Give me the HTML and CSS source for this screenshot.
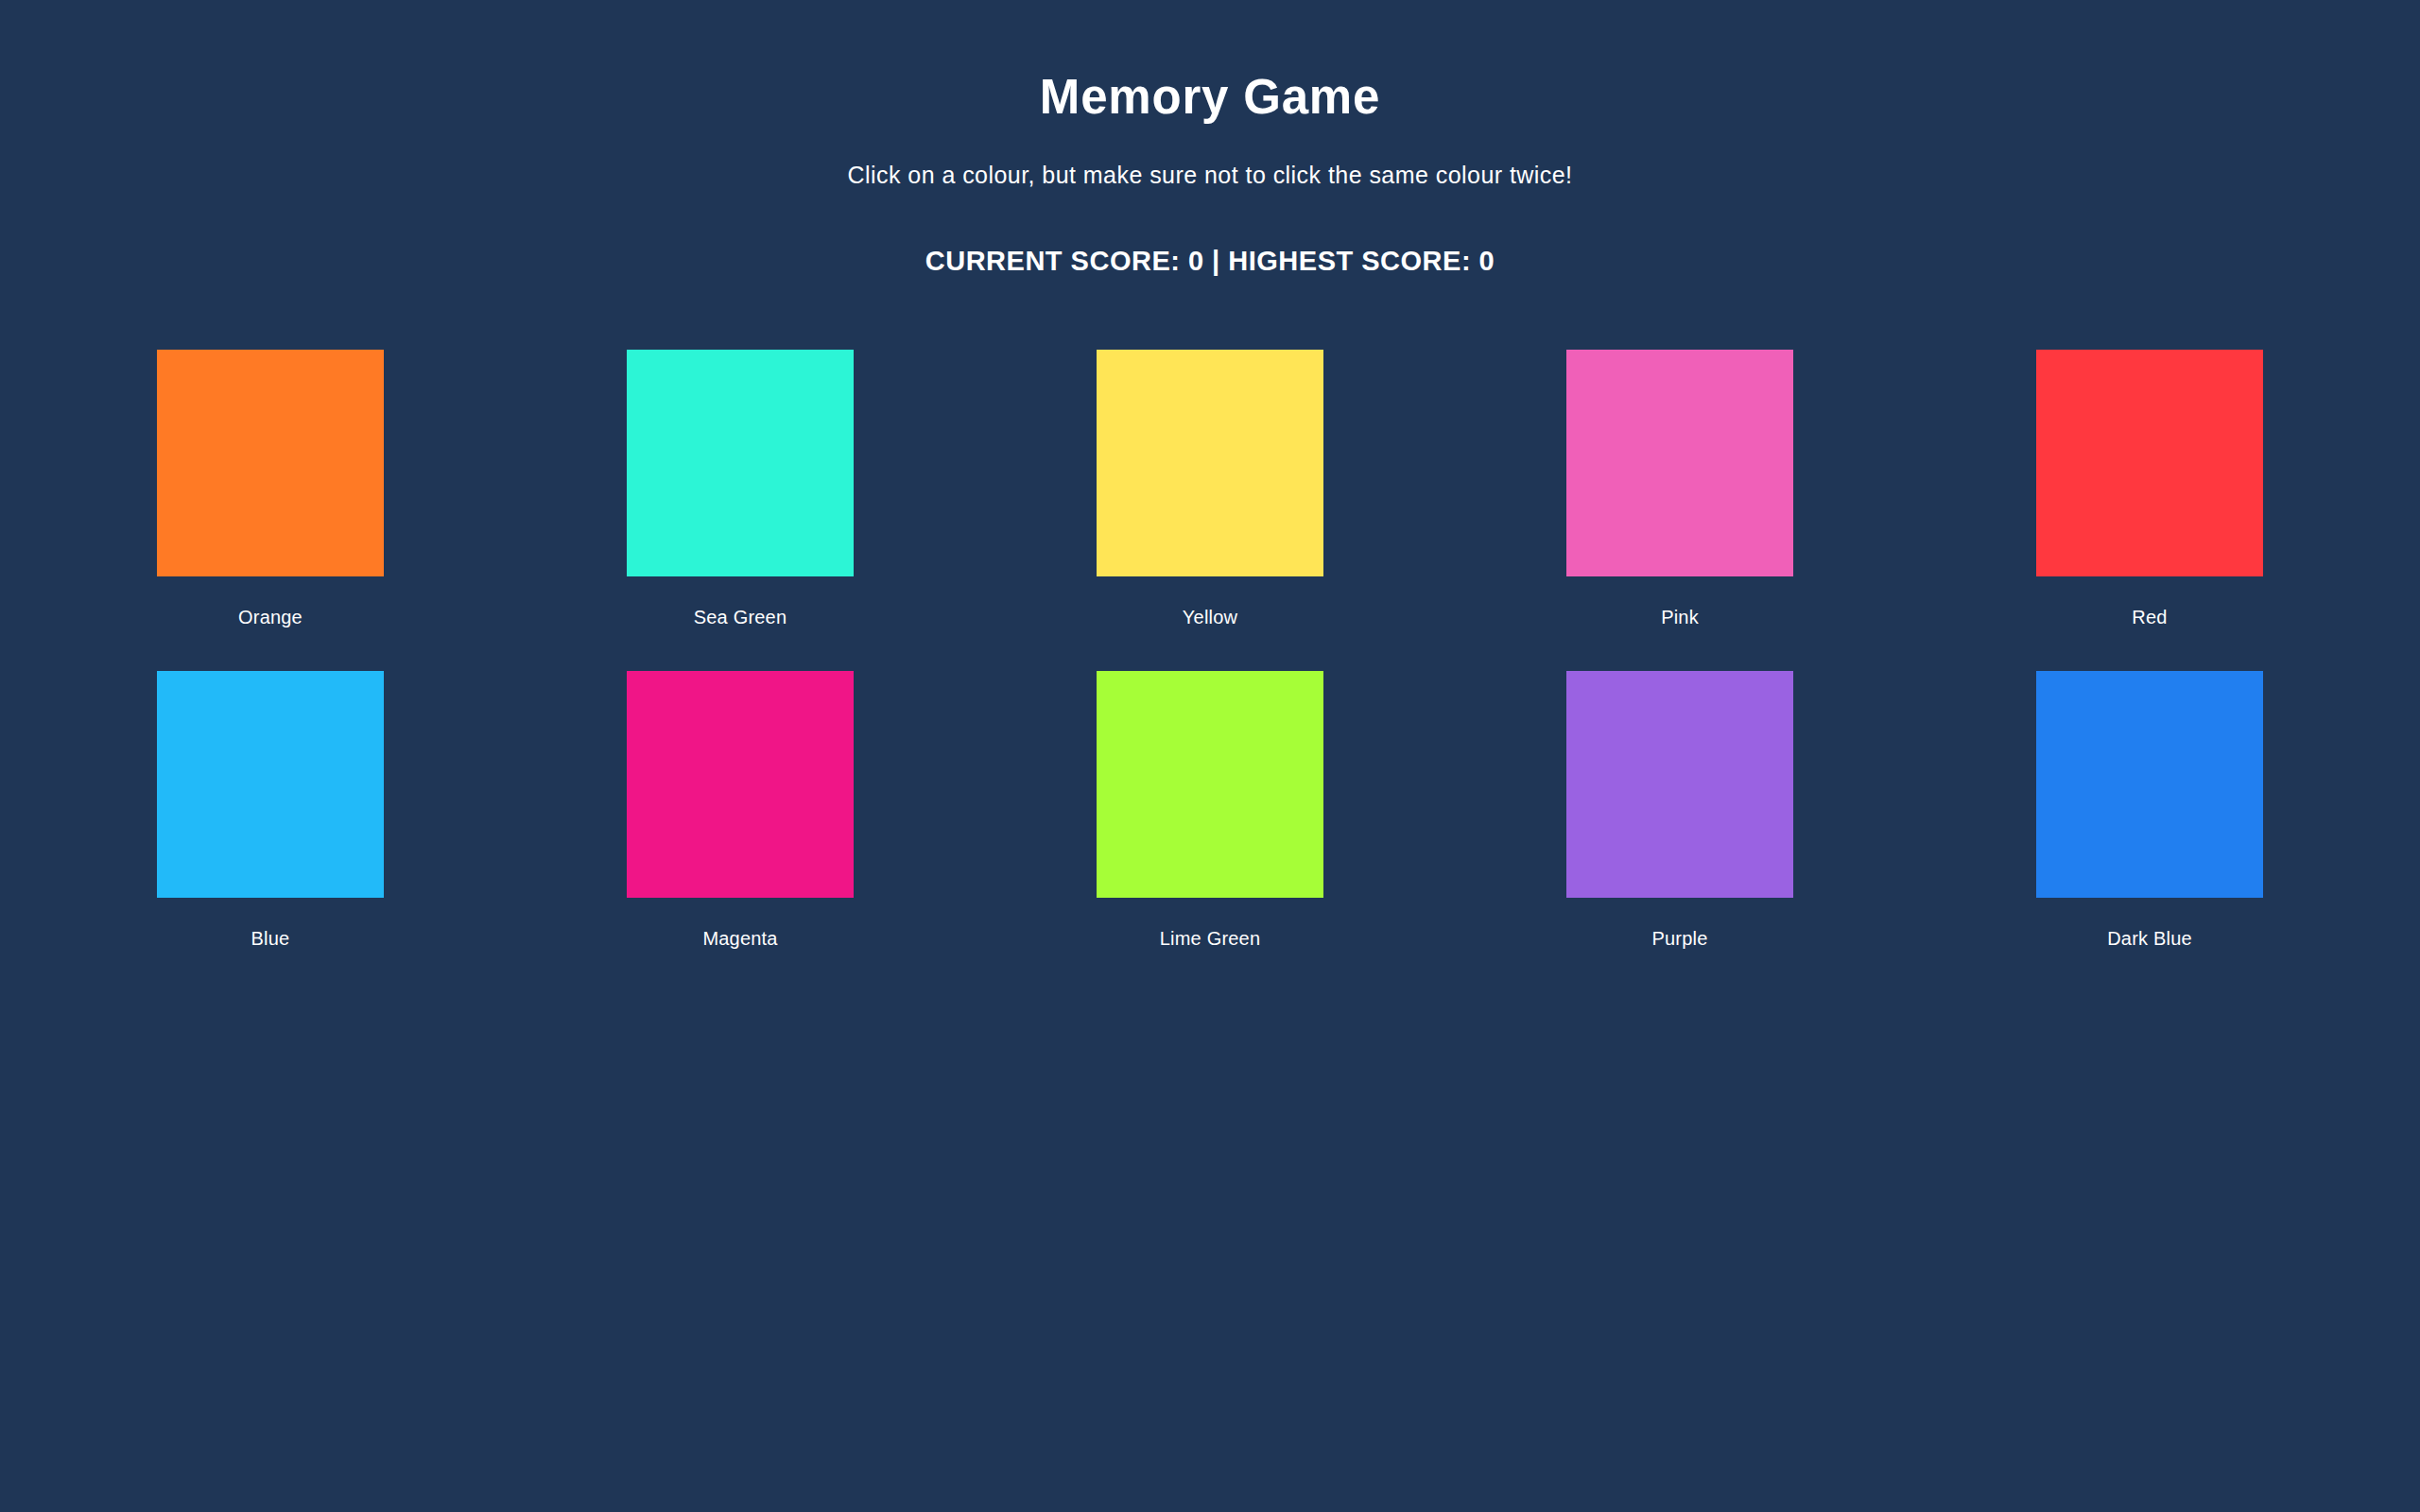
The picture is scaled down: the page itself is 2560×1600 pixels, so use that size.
FILE: index.html
```html
<!DOCTYPE html>
<html lang="en">
<head>
<meta charset="utf-8">
<title>Memory Game</title>
<link rel="stylesheet" href="styles.css">
</head>
<body>
<header class="header">
  <h1 class="title">Memory Game</h1>
  <p class="subtitle">Click on a colour, but make sure not to click the same colour twice!</p>
  <h2 class="score">CURRENT SCORE: 0 | HIGHEST SCORE: 0</h2>
</header>
<main class="grid">
  <div class="card"><div class="swatch orange"></div><div class="label">Orange</div></div>
  <div class="card"><div class="swatch seagreen"></div><div class="label">Sea Green</div></div>
  <div class="card"><div class="swatch yellow"></div><div class="label">Yellow</div></div>
  <div class="card"><div class="swatch pink"></div><div class="label">Pink</div></div>
  <div class="card"><div class="swatch red"></div><div class="label">Red</div></div>
  <div class="card"><div class="swatch blue"></div><div class="label">Blue</div></div>
  <div class="card"><div class="swatch magenta"></div><div class="label">Magenta</div></div>
  <div class="card"><div class="swatch lime"></div><div class="label">Lime Green</div></div>
  <div class="card"><div class="swatch purple"></div><div class="label">Purple</div></div>
  <div class="card"><div class="swatch darkblue"></div><div class="label">Dark Blue</div></div>
</main>
</body>
</html>
```
FILE: styles.css
```css
html, body {
  margin: 0;
  padding: 0;
  background: #1f3656;
  min-height: 100%;
}
body {
  font-family: "Liberation Sans", Arial, Helvetica, sans-serif;
  color: #ffffff;
  min-height: 1600px;
}
.header {
  text-align: center;
  padding-top: 73px;
}
.title {
  margin: 0;
  font-size: 51px;
  line-height: 60px;
  font-weight: bold;
  letter-spacing: 0.8px;
}
.subtitle {
  margin: 37px 0 0;
  font-size: 25px;
  line-height: 30px;
  letter-spacing: 0.45px;
}
.score {
  margin: 59px 0 0;
  font-size: 29px;
  line-height: 34px;
  font-weight: bold;
  letter-spacing: 0.5px;
}
.grid {
  display: grid;
  grid-template-columns: repeat(5, 497px);
  justify-content: center;
  row-gap: 45px;
  margin-top: 77px;
}
.card {
  display: flex;
  flex-direction: column;
  align-items: center;
}
.swatch {
  width: 240px;
  height: 240px;
  cursor: pointer;
}
.label {
  margin-top: 31px;
  font-size: 20px;
  line-height: 24px;
  letter-spacing: 0.2px;
}
.orange { background: #ff7a25; }
.seagreen { background: #2cf5d6; }
.yellow { background: #ffe556; }
.pink { background: #f060b8; }
.red { background: #ff383f; }
.blue { background: #22baf9; }
.magenta { background: #f01587; }
.lime { background: #a6fe37; }
.purple { background: #9a62e2; }
.darkblue { background: #217ff0; }
```
